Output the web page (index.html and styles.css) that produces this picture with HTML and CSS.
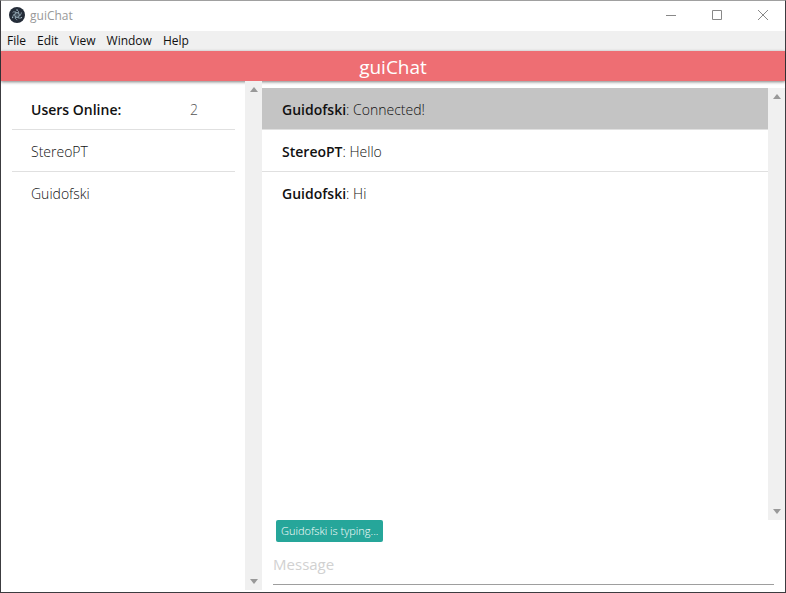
FILE: index.html
```html
<!DOCTYPE html>
<html lang="en">
<head>
<meta charset="utf-8">
<title>guiChat</title>
<link rel="stylesheet" href="styles.css">
</head>
<body>
<div class="window">
  <div class="titlebar">
    <svg class="app-icon" viewBox="0 0 16 16" aria-hidden="true">
      <circle cx="8" cy="8" r="8" fill="#242c38"/>
      <g fill="none" stroke="#a9c0cc" stroke-width=".6">
        <ellipse cx="8" cy="8" rx="5" ry="2" transform="rotate(90 8 8)" stroke-dasharray="9 2"/>
        <ellipse cx="8" cy="8" rx="5" ry="2" transform="rotate(30 8 8)" stroke-dasharray="9 2"/>
        <ellipse cx="8" cy="8" rx="5" ry="2" transform="rotate(-30 8 8)" stroke-dasharray="9 2"/>
      </g>
      <g fill="#a9c0cc"><circle cx="8" cy="8" r=".6"/><circle cx="3.6" cy="10.6" r=".7"/><circle cx="12.4" cy="10.6" r=".7"/><circle cx="8" cy="3" r=".7"/></g>
    </svg>
    <span class="window-title">guiChat</span>
    <button class="control" aria-label="Minimize"><svg viewBox="0 0 12 12"><path d="M1 6.5h10"/></svg></button>
    <button class="control" aria-label="Maximize"><svg viewBox="0 0 12 12"><path d="M1.500 1.500h9v9h-9z"/></svg></button>
    <button class="control" aria-label="Close"><svg viewBox="0 0 12 12"><path d="M1 1l10 10M11 1L1 11"/></svg></button>
  </div>
  <nav class="menubar">
    <button>File</button><button>Edit</button><button>View</button><button>Window</button><button>Help</button>
  </nav>
  <header class="header"><h1>guiChat</h1></header>
  <main class="content">
    <aside class="sidebar">
      <ul class="users">
        <li><strong>Users Online:</strong><span class="count">2</span></li>
        <li>StereoPT</li>
        <li>Guidofski</li>
      </ul>
      <div class="scrollbar"><svg viewBox="0 0 8 5"><path d="M0 5l4-5 4 5z"/></svg><svg viewBox="0 0 8 5"><path d="M0 0l4 5 4-5z"/></svg></div>
    </aside>
    <section class="chat">
      <div class="log">
        <ul class="messages">
          <li class="notice"><strong>Guidofski</strong>: Connected!</li>
          <li><strong>StereoPT</strong>: Hello</li>
          <li><strong>Guidofski</strong>: Hi</li>
        </ul>
        <div class="scrollbar"><svg viewBox="0 0 8 5"><path d="M0 5l4-5 4 5z"/></svg><svg viewBox="0 0 8 5"><path d="M0 0l4 5 4-5z"/></svg></div>
      </div>
      <form class="composer">
        <span class="typing">Guidofski is typing...</span>
        <input type="text" placeholder="Message" aria-label="Message">
      </form>
    </section>
  </main>
</div>
</body>
</html>
```
FILE: styles.css
```css
* { box-sizing: border-box; }
body {
  margin: 0;
  font: 300 14px/21px "Open Sans", "Noto Sans", sans-serif;
  color: #111;
}
.window {
  display: flex;
  flex-direction: column;
  height: 100vh;
  border: 1px solid #3c3c40;
  border-top-color: #a0a0a0;
  background: #fff;
}
button { border: 0; padding: 0; background: none; font: inherit; color: inherit; }
ul { list-style: none; margin: 0; padding: 0; }
strong { font-weight: 600; }
.titlebar { display: flex; align-items: center; height: 30px; padding-left: 8px; }
.app-icon { width: 16px; height: 16px; margin-bottom: 2px; }
.window-title {
  flex: 1;
  margin-left: 5px;
  font-size: 12px;
  font-weight: 400;
  line-height: 30px;
  color: #999;
}
.control { display: flex; align-items: center; justify-content: center; width: 46px; height: 30px; padding: 0 0 2px 2px; }
.control svg { width: 12px; height: 12px; fill: none; stroke: #888; stroke-width: 1; }
.menubar {
  display: flex;
  gap: 11px;
  height: 20px;
  padding-left: 6px;
  background: #f0f0f0;
  font-size: 12px;
  font-weight: 400;
  line-height: 20px;
}
.header {
  position: relative;
  height: 30px;
  background: #ee6e73;
  box-shadow: 0 1px 3px rgba(0, 0, 0, .5);
  color: #fff;
  text-align: center;
}
.header h1 { margin: 0; font-size: 19px; font-weight: 400; line-height: 32px; }
.content { display: flex; flex: 1; min-height: 0; }
.sidebar { position: relative; display: flex; width: 33.3%; padding-bottom: 2px; }
.users { flex: 1; padding: 7px 10px 0 11px; }
.users li {
  display: flex;
  justify-content: space-between;
  padding: 11px 37px 9px 19px;
  border-bottom: 1px solid #e0e0e0;
}
.users li:last-child, .messages li:last-child { border-bottom: 0; }
.count { color: #555; }
.scrollbar {
  display: flex;
  flex-direction: column;
  justify-content: space-between;
  align-items: center;
  width: 17px;
  padding: 6px 0;
  background: #f0f0f0;
}
.scrollbar svg { width: 8px; height: 5px; fill: #999; }
.chat { display: flex; flex: 1; flex-direction: column; padding-top: 7px; }
.log { display: flex; flex: 1; }
.messages { flex: 1; }
.messages li { padding: 11px 20px 9px; border-bottom: 1px solid #e0e0e0; }
.messages .notice { background: #c4c4c4; }
.composer { height: 72px; padding: 0 11px; }
.typing {
  display: block;
  width: fit-content;
  margin-left: 3px;
  padding: 0 5px;
  border-radius: 2px;
  background: #26a69a;
  color: #fff;
  font-size: 11px;
  font-weight: 300;
  line-height: 22px;
}
.composer input {
  display: block;
  width: 100%;
  height: 43px;
  padding: 2px 0 0;
  border: 0;
  border-bottom: 1px solid #9e9e9e;
  background: none;
  font: 400 15px "Open Sans", "Noto Sans", sans-serif;
  outline: 0;
}
.composer input::placeholder { color: #d1d1d1; opacity: 1; }
```
